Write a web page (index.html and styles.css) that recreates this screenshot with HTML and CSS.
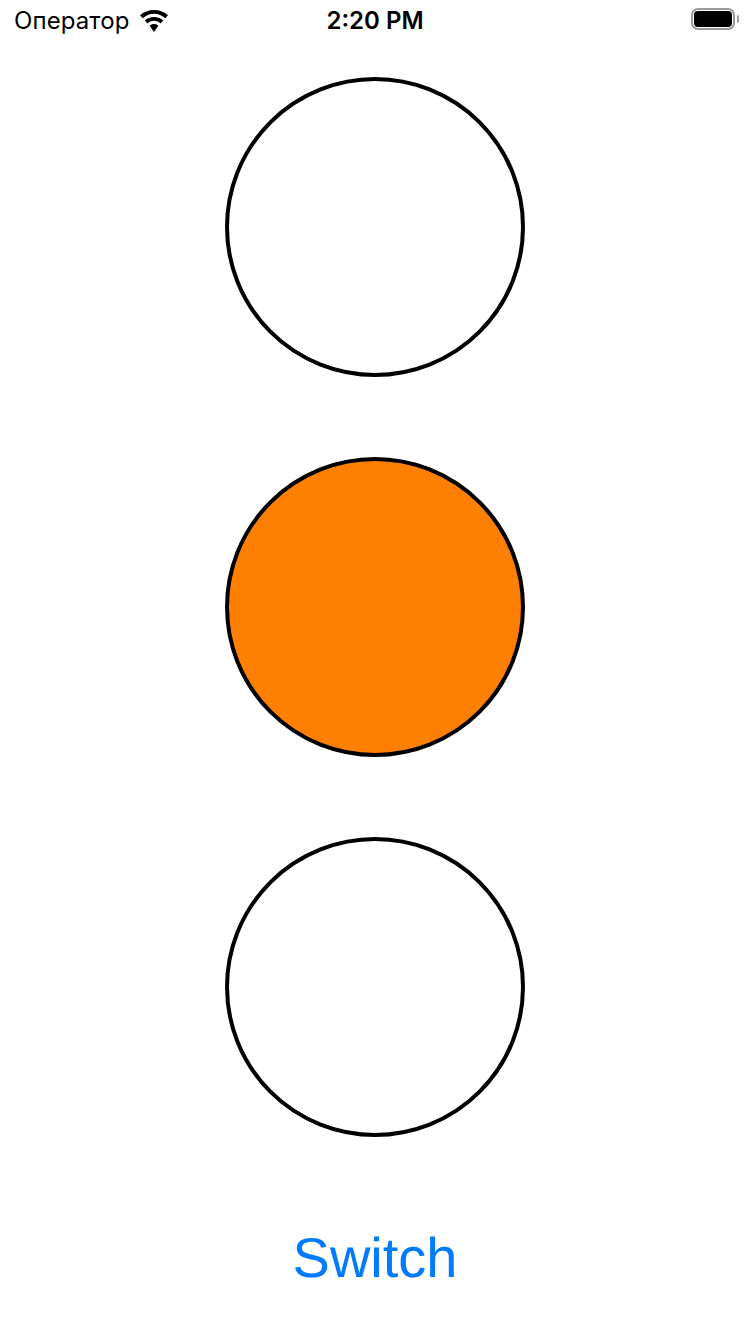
FILE: index.html
```html
<!DOCTYPE html>
<html lang="ru">
<head>
<meta charset="utf-8">
<title>Switch</title>
<link rel="stylesheet" href="styles.css">
</head>
<body>
<div class="screen">
  <header class="status">
    <div class="status-left">
      <span class="carrier">Оператор</span>
      <svg class="wifi" width="30" height="22" viewBox="0 0 30 22">
        <path d="M15 3.700c4.400 0 8.300 1.800 11.200 4.600l2.800-3C25.400 2 20.500 0 15 0S4.600 2 1 5.300l2.800 3C6.700 5.500 10.600 3.700 15 3.700z" fill="#000"/>
        <path d="M15 10.800c2.500 0 4.800 1 6.500 2.600l2.800-3C21.900 8.200 18.600 6.900 15 6.900s-6.900 1.300-9.300 3.500l2.800 3c1.700-1.600 4-2.600 6.500-2.600z" fill="#000"/>
        <path d="M15 14c-1.700 0-3.200.6-4.400 1.700L15 22l4.400-6.300C18.200 14.600 16.700 14 15 14z" fill="#000"/>
      </svg>
    </div>
    <div class="clock">2:20 PM</div>
    <div class="status-right">
      <div class="battery"><div class="battery-fill"></div></div>
      <div class="battery-cap"></div>
    </div>
  </header>
  <main class="lights">
    <div class="light"></div>
    <div class="light light-on"></div>
    <div class="light"></div>
  </main>
  <div class="action">
    <button class="switch" type="button">Switch</button>
  </div>
</div>
</body>
</html>
```
FILE: styles.css
```css
* { box-sizing: border-box; }
html, body { margin: 0; padding: 0; background: #fff; }
.screen { width: 750px; height: 1334px; display: flex; flex-direction: column; overflow: hidden; }
.status { height: 40px; display: grid; grid-template-columns: 1fr auto 1fr; align-items: center; padding: 1px 14px 0; color: #000; font-family: Inter, "Noto Sans", sans-serif; }
.status-left { display: flex; align-items: center; gap: 9px; }
.carrier { font-size: 24px; line-height: 39px; letter-spacing: 0.1px; }
.wifi { display: block; }
.clock { font-size: 24px; font-weight: 600; line-height: 39px; }
.status-right { display: flex; align-items: center; justify-content: flex-end; gap: 2px; margin: 0 -3px 3px 0; }
.battery { width: 44px; height: 22px; border: 2px solid #999; border-radius: 7px; padding: 1px; }
.battery-fill { width: 100%; height: 100%; background: #000; border-radius: 4px; }
.battery-cap { width: 2px; height: 8px; background: #999; border-radius: 0 2px 2px 0; }
.lights { display: flex; flex-direction: column; align-items: center; gap: 80px; padding-top: 37px; }
.light { width: 300px; height: 300px; border: 4px solid #000; border-radius: 50%; background: #fff; }
.light-on { background: #ff8000; }
.action { display: flex; justify-content: center; padding-top: 83px; }
.switch { border: 0; padding: 0; background: none; color: #007aff; font-family: "Liberation Sans", Arial, sans-serif; font-size: 56px; line-height: 76px; text-rendering: geometricPrecision; }
```
